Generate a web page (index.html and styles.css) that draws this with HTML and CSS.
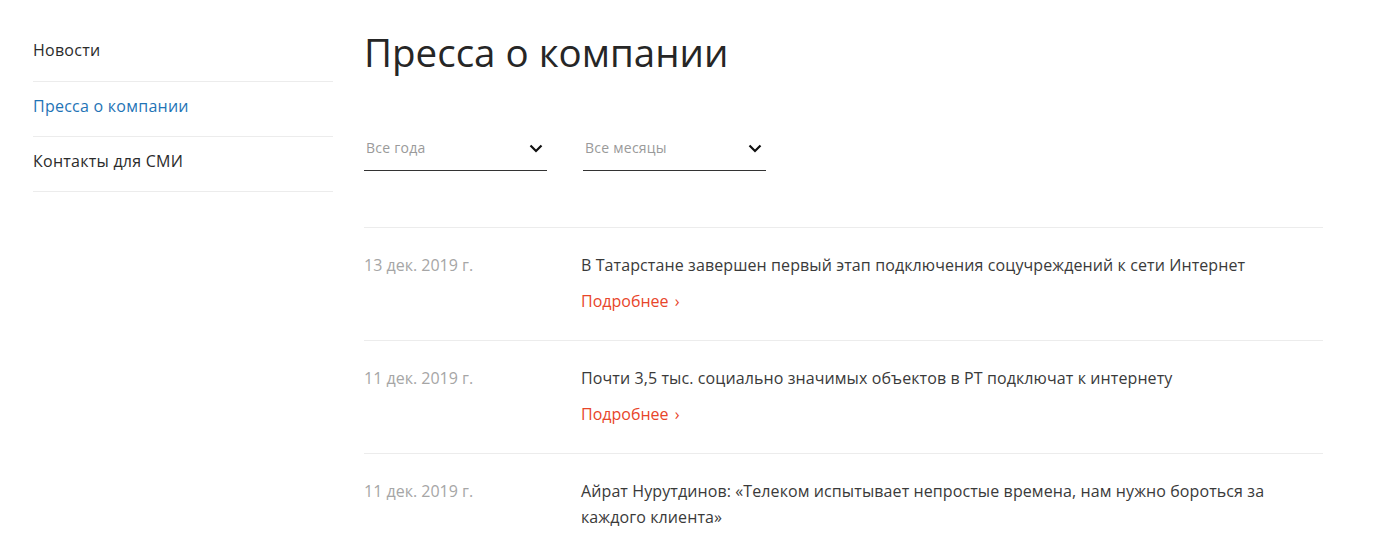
FILE: index.html
```html
<!DOCTYPE html>
<html lang="ru">
<head>
<meta charset="utf-8">
<title>Пресса о компании</title>
<link rel="stylesheet" href="styles.css">
</head>
<body>
<div class="page">
  <nav class="sidebar">
    <a class="side-item" href="#">Новости</a>
    <a class="side-item active" href="#">Пресса о компании</a>
    <a class="side-item" href="#">Контакты для СМИ</a>
  </nav>
  <main class="content">
    <h1 class="title">Пресса о компании</h1>
    <div class="filters">
      <div class="select">
        <span class="select-label">Все года</span>
        <svg class="chev" width="14" height="9" viewBox="0 0 14 9"><path d="M1.5 1.5 L7 7 L12.5 1.5" fill="none" stroke="#111" stroke-width="2.2"/></svg>
      </div>
      <div class="select">
        <span class="select-label">Все месяцы</span>
        <svg class="chev" width="14" height="9" viewBox="0 0 14 9"><path d="M1.5 1.5 L7 7 L12.5 1.5" fill="none" stroke="#111" stroke-width="2.2"/></svg>
      </div>
    </div>
    <div class="list">
      <div class="row">
        <div class="date">13 дек. 2019 г.</div>
        <div class="body">
          <div class="headline">В Татарстане завершен первый этап подключения соцучреждений к сети Интернет</div>
          <a class="more" href="#">Подробнее <span class="arr">›</span></a>
        </div>
      </div>
      <div class="row">
        <div class="date">11 дек. 2019 г.</div>
        <div class="body">
          <div class="headline">Почти 3,5 тыс. социально значимых объектов в РТ подключат к интернету</div>
          <a class="more" href="#">Подробнее <span class="arr">›</span></a>
        </div>
      </div>
      <div class="row">
        <div class="date">11 дек. 2019 г.</div>
        <div class="body">
          <div class="headline">Айрат Нурутдинов: «Телеком испытывает непростые времена, нам нужно бороться за каждого клиента»</div>
          <a class="more" href="#">Подробнее <span class="arr">›</span></a>
        </div>
      </div>
    </div>
  </main>
</div>
</body>
</html>
```
FILE: styles.css
```css
* { box-sizing: border-box; }
html, body { margin: 0; padding: 0; background: #fff; }
body {
  font-family: "Open Sans", "Noto Sans", sans-serif;
  color: #333;
  overflow: hidden;
}
.page {
  display: flex;
  padding-left: 33px;
  padding-top: 26px;
}
.sidebar {
  width: 300px;
  flex: none;
  display: flex;
  flex-direction: column;
}
.side-item {
  display: block;
  font-size: 16px;
  letter-spacing: 0.25px;
  line-height: 20px;
  padding: 14px 0 21px;
  border-bottom: 1px solid #ececec;
  color: #2b2b2b;
  text-decoration: none;
}
.side-item + .side-item { padding-bottom: 20px; }
.side-item.active { color: #1f74b6; }
.content {
  margin-left: 31px;
  width: 959px;
  flex: none;
}
.title {
  margin: 0;
  font-weight: 400;
  font-size: 38.5px;
  line-height: 52px;
  color: #262626;
}
.filters {
  display: flex;
  gap: 36px;
  margin-top: 52px;
}
.select {
  width: 183px;
  height: 41px;
  border-bottom: 1px solid #333;
  display: flex;
  align-items: flex-start;
  justify-content: space-between;
  padding: 8px 2px 0 2px;
}
.select-label {
  font-size: 14px;
  letter-spacing: 0.25px;
  line-height: 20px;
  color: #9a9a9a;
}
.chev { margin-top: 6px; margin-right: 2px; }
.list {
  margin-top: 56px;
  border-top: 1px solid #ececec;
}
.row {
  display: flex;
  border-bottom: 1px solid #ececec;
  padding: 24px 0 26px;
}
.date {
  width: 217px;
  flex: none;
  font-size: 16px;
  line-height: 26px;
  color: #a6a6a6;
}
.body { flex: 1; }
.headline {
  font-size: 16px;
  letter-spacing: 0.1px;
  line-height: 26px;
  color: #3a3a3a;
  max-width: 700px;
}
.more {
  display: inline-block;
  margin-top: 10px;
  font-size: 16px;
  line-height: 26px;
  color: #e8452a;
  text-decoration: none;
}
.arr { margin-left: 2px; }
```
